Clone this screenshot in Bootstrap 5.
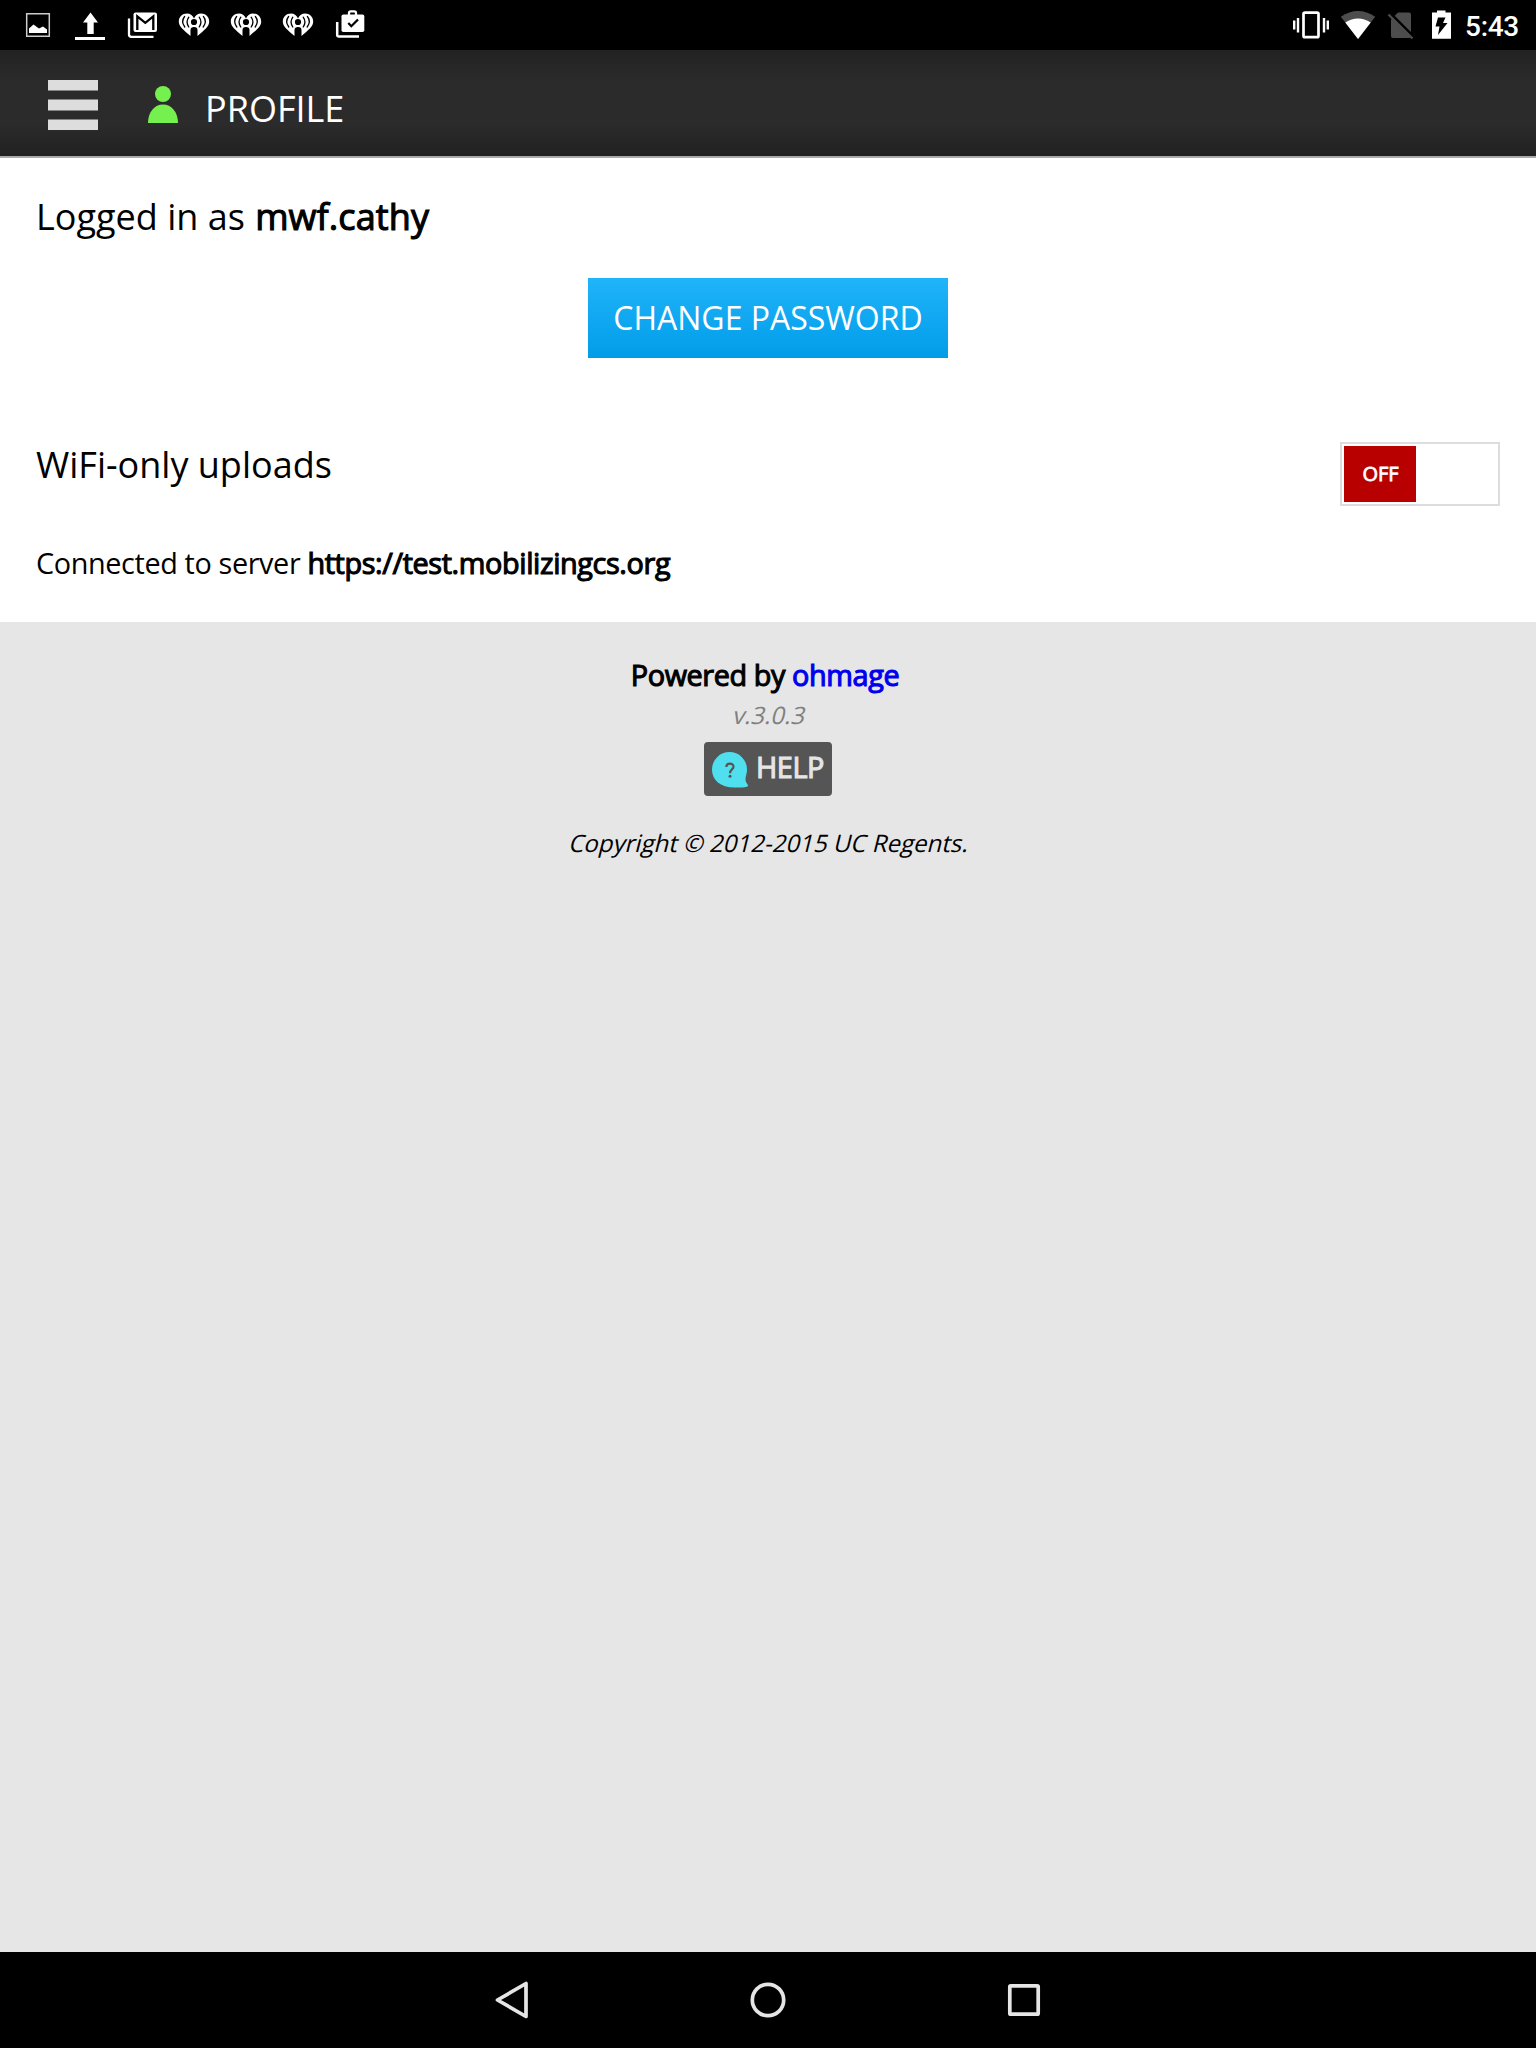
<!DOCTYPE html>
<html lang="en">
<head>
<meta charset="utf-8">
<meta name="viewport" content="width=device-width, initial-scale=1">
<title>Profile</title>
<link href="https://cdn.jsdelivr.net/npm/bootstrap@5.3.0/dist/css/bootstrap.min.css" rel="stylesheet">
<style>
  body { font-family: "Open Sans", sans-serif; background: #e6e6e6; color: #000; font-size: 36px; line-height: 44px; }
  svg { display: block; flex: none; }
  .status-bar { height: 50px; background: #000; padding-left: 12px; padding-right: 17px; }
  .clock { font: 500 28px/50px Roboto, sans-serif; padding-top: 3px; letter-spacing: -.3px; }
  .app-bar { height: 108px; border-bottom: 2px solid #aaa; background: linear-gradient(#222, #2b2b2b 30%, #2b2b2b 70%, #212121); padding-left: 48px; }
  .app-bar h1 { font-size: 36px; line-height: 44px; padding-top: 12px; margin-left: 23px; }
  .menu-bars { margin-top: 4px; }
  .person { margin-left: 50px; margin-top: 3px; }
  .faux-bold { font-weight: 400; -webkit-text-stroke: 1.1px currentColor; }
  .faux-oblique { transform: skewX(-14deg); transform-origin: 50% 29px; }
  .profile-panel { padding: 34px 36px 40px; }
  .user-line { line-height: 50px; margin-bottom: 36px; }
  .user-line .faux-bold { margin-left: 1px; letter-spacing: .1px; }
  .btn-password { width: 360px; height: 80px; padding: 0; border: 0; border-radius: 0; font-size: 32px; color: #fff; background: linear-gradient(#20b4fa, #019ce8); }
  .btn-password:hover { color: #fff; background: #019ce8; }
  .wifi-row { margin-top: 84px; margin-bottom: 37px; }
  .wifi-row > span { padding-top: 1px; }
  .toggle { width: 160px; height: 64px; border: 2px solid #ddd; padding: 2px; background: #fff; }
  .toggle-state { width: 72px; padding-left: 1px; background: #b90000; color: #fff; font-size: 20px; -webkit-text-stroke: .8px #fff; }
  .server-line { font-size: 28.8px; letter-spacing: -.37px; line-height: 39px; }
  .page-foot { padding-top: 33px; line-height: 40px; }
  .powered { font-size: 28.8px; letter-spacing: -.4px; line-height: 39px; padding-right: 6px; }
  .powered a { color: #00e; }
  .version { font-size: 24px; color: #808080; padding-top: 1px; line-height: 39px; }
  .btn-help { width: 128px; height: 54px; margin-top: 8px; padding: 0 8px; border: 0; border-radius: 4px; background: #555; color: #e5e5e5; font-size: 28.8px; letter-spacing: -.4px; line-height: 40px; }
  .btn-help svg { margin-top: 2px; }
  .btn-help span { margin-left: 8px; margin-top: -5px; }
  .copyright { font-size: 24px; margin-top: 27px; }
  .nav-keys { height: 96px; background: #000; }
  .nav-keys svg { margin: 0 104px; }
</style>
</head>
<body class="d-flex flex-column min-vh-100">
<svg width="0" height="0" class="position-absolute">
  <defs>
    <g id="radio-heart">
      <path fill="#fff" d="M26 18.500C24.500 15 22 13.500 19 13.500C14.300 13.500 10.800 17 10.800 21.500C10.800 26.500 15 29.500 22.500 36V30A3.500 3 0 0 1 29.500 30V36C37 29.500 41.200 26.500 41.200 21.500C41.200 17 37.700 13.500 33 13.500C30 13.500 27.500 15 26 18.500Z"/>
      <circle cx="26" cy="22" r="3.100" fill="#000"/>
      <path fill="none" stroke="#000" stroke-width="1.300" stroke-linecap="round" d="M20.800 17.200Q17.300 22 20.800 27M31.200 17.200Q34.700 22 31.200 27M16.600 16.500Q12.700 21.500 16.800 27M35.400 16.500Q39.300 21.500 35.200 27"/>
    </g>
  </defs>
</svg>

<div class="status-bar d-flex align-items-center justify-content-between text-white">
  <div class="d-flex">
    <svg width="52" height="50" viewBox="0 0 52 50"><path d="M14.700 13.700H37.300V36.300H14.700Z" fill="none" stroke="#ccc" stroke-width="1.500"/><path d="M17 33V28.500L21.500 24.500L27 28.500L31 26.500L35 29.500V33Z" fill="#fff"/></svg>
    <svg width="52" height="50" viewBox="0 0 52 50" fill="#fff"><path d="M26.500 12.500L34 22.500H29.700V34H23.300V22.500H19Z"/><path d="M11 37H41V40H11Z"/></svg>
    <svg width="52" height="50" viewBox="0 0 52 50"><path d="M13 18.500V34.500Q13 36.800 15.300 36.800H37.500" fill="none" stroke="#fff" stroke-width="2.300"/><rect x="17.500" y="12.500" width="23.500" height="19.500" rx="2" fill="#fff"/><path d="M21.300 30V16.300L29.300 22.800L37.300 16.300V30" fill="none" stroke="#000" stroke-width="2.300"/></svg>
    <svg width="52" height="50" viewBox="0 0 52 50"><use href="#radio-heart"/></svg>
    <svg width="52" height="50" viewBox="0 0 52 50"><use href="#radio-heart"/></svg>
    <svg width="52" height="50" viewBox="0 0 52 50"><use href="#radio-heart"/></svg>
    <svg width="52" height="50" viewBox="0 0 52 50"><path d="M13.200 22V34.700Q13.200 36.500 15 36.500H35" fill="none" stroke="#fff" stroke-width="2.500"/><path d="M25 15V13Q25 11.300 26.700 11.300H30.300Q32 11.300 32 13V15" fill="none" stroke="#fff" stroke-width="2.300"/><rect x="17.500" y="14.500" width="22.800" height="17.500" rx="1.800" fill="#fff"/><path d="M24.300 23L27.300 26.200L34 19.500" fill="none" stroke="#000" stroke-width="2.300"/></svg>
  </div>
  <div class="d-flex align-items-center">
    <svg width="48" height="50" viewBox="0 0 48 50"><rect x="16.500" y="12.600" width="15" height="24.600" rx="1.500" fill="none" stroke="#fff" stroke-width="2.700"/><path d="M7.200 20.500V29.500M11 18V32.500M37 18V32.500M40.800 20.500V29.500" stroke="#fff" stroke-width="2.400"/></svg>
    <svg width="46" height="50" viewBox="0 0 46 50"><path d="M23 39L5.800 16.800Q23 5.200 40.200 16.800Z" fill="#4d4d4d"/><path d="M23 39L10.300 22.600Q23 14.200 35.700 22.600Z" fill="#fff"/></svg>
    <svg width="40" height="50" viewBox="0 0 40 50"><path d="M11 18.500L17 12.500H28Q30 12.500 30 14.500V36Q30 38 28 38H12Q10 38 10 36V19.500Z" fill="#4d4d4d"/><path d="M9 13L34 38" stroke="#000" stroke-width="2.500"/><path d="M7.500 14.500L31.500 38.500" stroke="#4d4d4d" stroke-width="2.300"/></svg>
    <svg width="44" height="50" viewBox="0 0 44 50"><path d="M16 12.500V10.500H24.500V12.500H30V38.800H11V12.500Z" fill="#fff"/><path d="M17 17.500H24.500L22 23H26.500L17 35L18.500 26.500H14.500Z" fill="#000"/></svg>
    <span class="clock">5:43</span>
  </div>
</div>

<header class="app-bar d-flex align-items-center text-white">
  <svg class="menu-bars" width="50" height="50" viewBox="0 0 50 50"><path fill="#ddd" d="M0 0H50V10.500H0ZM0 19.500H50V30.500H0ZM0 39.500H50V50H0Z"/></svg>
  <svg class="person" width="34" height="38" viewBox="0 0 34 38" fill="#75f04f"><circle cx="15" cy="8" r="8"/><path d="M0 37C0 26 6.500 18.500 15 18.500S30 26 30 37Z"/></svg>
  <h1 class="fw-normal mb-0">PROFILE</h1>
</header>

<main class="profile-panel bg-white">
  <p class="user-line">Logged in as <span class="faux-bold">mwf.cathy</span></p>
  <button type="button" class="btn btn-password d-block mx-auto">CHANGE PASSWORD</button>
  <div class="wifi-row d-flex justify-content-between align-items-start">
    <span>WiFi-only uploads</span>
    <div class="toggle d-flex"><span class="toggle-state d-flex align-items-center justify-content-center">OFF</span></div>
  </div>
  <p class="server-line mb-0">Connected to server <span class="faux-bold">https://test.mobilizingcs.org</span></p>
</main>

<footer class="page-foot d-flex flex-column align-items-center flex-grow-1">
  <div class="powered faux-bold">Powered by <a href="#" class="text-decoration-none">ohmage</a></div>
  <div class="version faux-oblique">v.3.0.3</div>
  <button type="button" class="btn btn-help d-flex align-items-center">
    <svg width="36" height="36" viewBox="0 0 36 36"><path fill="#50dfef" d="M17.500 0A17.500 17.500 0 0 1 35 17.500C35 22 33.500 24 33.500 27C33.500 31 36 32 36 33.500C36 35.500 30 35.500 23 35.500C8 35.500 0 28 0 17.500A17.500 17.500 0 0 1 17.500 0Z"/><path fill="none" stroke="#555" stroke-width="2.200" d="M14.300 15C14.500 10.500 21.500 10.700 21.500 14.700C21.500 17.500 18 17.300 18 21.200"/><circle cx="18" cy="24.300" r="1.500" fill="#555"/></svg>
    <span class="faux-bold">HELP</span>
  </button>
  <div class="copyright faux-oblique">Copyright © 2012-2015 UC Regents.</div>
</footer>

<nav class="nav-keys d-flex justify-content-center align-items-center">
  <svg width="48" height="48" viewBox="0 0 48 48"><path d="M9.500 24L38 7.500V40.500Z" fill="none" stroke="#e5e5e5" stroke-width="3.700" stroke-linejoin="round"/></svg>
  <svg width="48" height="48" viewBox="0 0 48 48"><circle cx="24" cy="24" r="15.700" fill="none" stroke="#e5e5e5" stroke-width="3.700"/></svg>
  <svg width="48" height="48" viewBox="0 0 48 48"><rect x="9.800" y="9.800" width="28.400" height="28.400" rx="1" fill="none" stroke="#e5e5e5" stroke-width="3.700"/></svg>
</nav>
<script src="https://cdn.jsdelivr.net/npm/bootstrap@5.3.0/dist/js/bootstrap.bundle.min.js"></script>
</body>
</html>
